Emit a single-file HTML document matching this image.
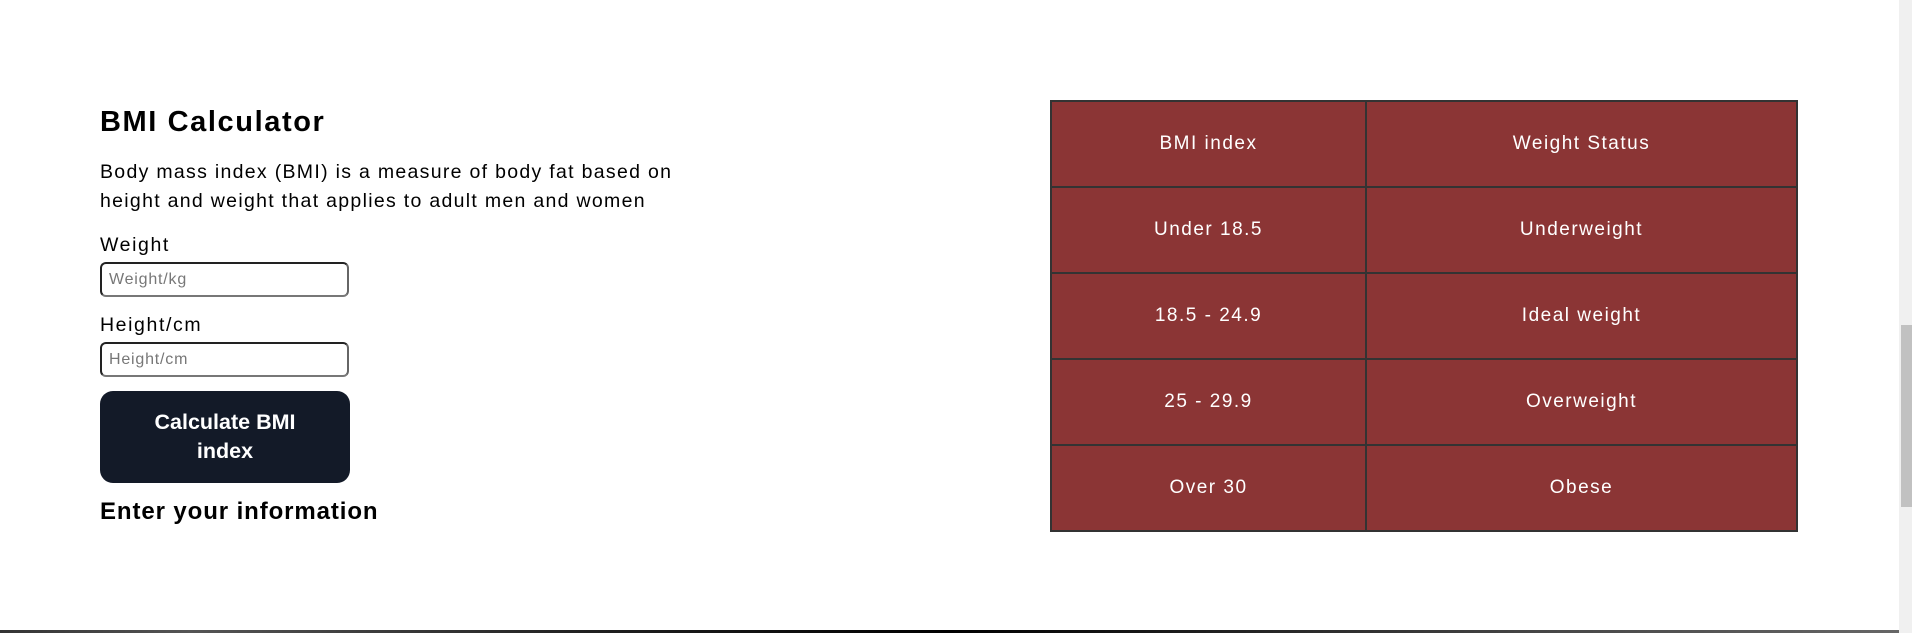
<!DOCTYPE html>
<html><head><meta charset="utf-8"><style>
html,body{margin:0;padding:0;}
body{width:1912px;height:633px;position:relative;overflow:hidden;background:#fff;font-family:"Liberation Sans",sans-serif;color:#000;}
.a{position:absolute;white-space:nowrap;}
h1{position:absolute;left:100px;top:105px;margin:0;font-size:29px;font-weight:bold;line-height:34px;letter-spacing:1.6px;}
.p{left:100px;top:158px;font-size:19.5px;line-height:29px;letter-spacing:1.3px;}
.lbl{left:100px;font-size:19.5px;line-height:24px;letter-spacing:1.6px;}
.in{position:absolute;left:100px;width:249px;height:35px;box-sizing:border-box;border:2px solid #222;border-bottom-color:#777;border-right-color:#666;border-radius:6px;font-size:16px;color:#777;padding-left:7px;line-height:31px;letter-spacing:0.8px;}
.btn{position:absolute;left:100px;top:391px;width:250px;height:92px;background:#131a28;border-radius:13px;color:#fff;font-weight:bold;font-size:21.5px;line-height:29px;text-align:center;box-sizing:border-box;padding-top:17px;}
.h2{left:100px;top:497px;font-size:24px;font-weight:bold;line-height:30px;letter-spacing:0.9px;}
table{position:absolute;left:1050px;top:100px;width:748px;border-collapse:collapse;background:#8b3535;color:#fff;font-size:19px;letter-spacing:1.5px;}
td{border:2px solid #333;text-align:center;height:84px;padding:0;}
td:first-child{width:313px;}
.sb{position:absolute;left:1899px;top:0;width:13px;height:633px;background:#f0f0f0;}
.th{position:absolute;left:1901px;top:325px;width:11px;height:182px;background:#c1c1c1;}
.bot{position:absolute;left:0;top:630px;width:1899px;height:3px;background:linear-gradient(90deg,#333,#555 10%,#222 30%,#000 50%,#444 80%,#666);}
</style></head><body>
<h1>BMI Calculator</h1>
<div class="a p">Body mass index (BMI) is a measure of body fat based on<br>height and weight that applies to adult men and women</div>
<div class="a lbl" style="top:233px">Weight</div>
<div class="in" style="top:262px">Weight/kg</div>
<div class="a lbl" style="top:313px">Height/cm</div>
<div class="in" style="top:342px">Height/cm</div>
<div class="btn">Calculate BMI<br>index</div>
<div class="a h2">Enter your information</div>
<table>
<tr><td>BMI index</td><td>Weight Status</td></tr>
<tr><td>Under 18.5</td><td>Underweight</td></tr>
<tr><td>18.5 - 24.9</td><td>Ideal weight</td></tr>
<tr><td>25 - 29.9</td><td>Overweight</td></tr>
<tr><td>Over 30</td><td>Obese</td></tr>
</table>
<div class="sb"></div><div class="th"></div>
<div class="bot"></div>
</body></html>
